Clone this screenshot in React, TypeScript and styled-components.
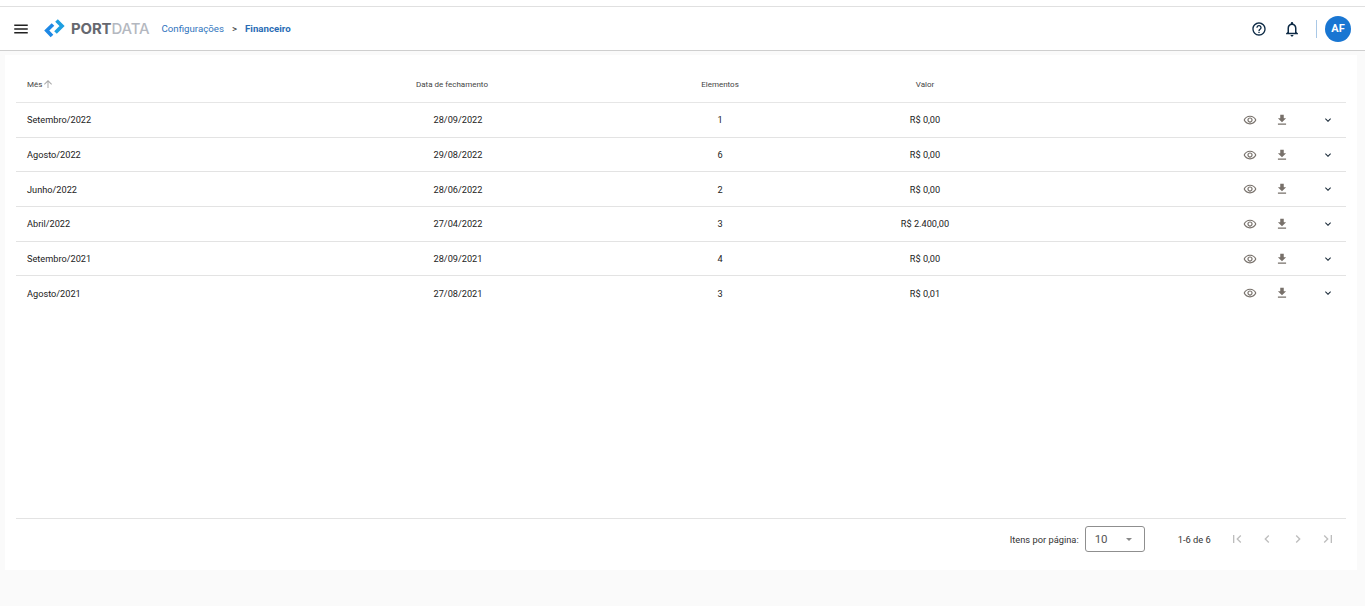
import React from 'react';
import styled, { createGlobalStyle } from 'styled-components';
import {
  MdArrowUpward,
  MdChevronLeft,
  MdChevronRight,
  MdExpandMore,
  MdFileDownload,
  MdFirstPage,
  MdHelpOutline,
  MdLastPage,
  MdMenu,
  MdNotificationsNone,
  MdOutlineRemoveRedEye,
} from 'react-icons/md';

const GlobalStyle = createGlobalStyle`
  html, body {
    margin: 0;
    height: 100%;
    background: #fafafa;
    font-family: Roboto, "Liberation Sans", sans-serif;
    color: #212121;
  }
`;

const Page = styled.div`
  width: 1365px;
  height: 606px;
  overflow: hidden;
  display: flex;
  flex-direction: column;
  background: #fafafa;
`;

const TopStrip = styled.div`
  height: 6px;
  background: #fff;
  border-bottom: 1px solid #e0e0e0;
`;

const Header = styled.header`
  height: 43px;
  flex: none;
  display: flex;
  align-items: center;
  background: #fff;
  border-bottom: 1px solid #cfcfcf;
  padding: 0 14px 0 12px;
`;

const MenuButton = styled.div`
  display: flex;
  width: 18px;
  margin-right: 14px;
  color: #212121;
`;

const Logo = styled.div`
  display: flex;
  align-items: center;
  gap: 6px;
  margin-right: 12px;
`;

const Wordmark = styled.div`
  font-family: Inter, Roboto, sans-serif;
  font-size: 14.9px;
  font-weight: 700;
  letter-spacing: -0.1px;
  color: #66686f;
  span {
    font-weight: 500;
    color: #b4b8c0;
  }
`;

const Crumbs = styled.nav`
  display: flex;
  align-items: center;
  font-size: 9.7px;
  color: #2f74bd;
`;

const Separator = styled.span`
  margin: 0 8px;
  color: #333;
`;

const CurrentCrumb = styled.span`
  font-weight: 700;
  color: #2a6db5;
`;

const HeaderRight = styled.div`
  margin-left: auto;
  display: flex;
  align-items: center;
`;

const HeaderIcon = styled.div<{ $gap: number }>`
  display: flex;
  color: #0d2a45;
  margin-right: ${(p) => p.$gap}px;
`;

const Divider = styled.div`
  width: 1px;
  height: 18px;
  background: #a9c8e6;
  margin-right: 8px;
`;

const Avatar = styled.div`
  width: 26px;
  height: 26px;
  border-radius: 50%;
  background: #1976d2;
  color: #fff;
  font-size: 11px;
  font-weight: 700;
  display: flex;
  align-items: center;
  justify-content: center;
`;

const Card = styled.main`
  margin: 4px 8px 0 5px;
  height: 515px;
  background: #fff;
  padding: 0 11px;
  display: flex;
  flex-direction: column;
`;

const Columns = styled.div`
  display: grid;
  grid-template-columns: 304px 264px 272px 138px 1fr;
  align-items: center;
`;

const HeadRow = styled(Columns)`
  height: 36px;
  padding-top: 11px;
  border-bottom: 1px solid #e6e6e6;
  font-size: 8px;
  color: #444;
`;

const Row = styled(Columns)<{ $last?: boolean }>`
  height: 33.7px;
  border-bottom: ${(p) => (p.$last ? 'none' : '1px solid #e3e3e3')};
  font-size: 9.2px;
  color: #222;
`;

const Cell = styled.div<{ $left?: boolean; $shift?: number }>`
  padding-left: ${(p) => (p.$left ? 11 : p.$shift ?? 0)}px;
  display: flex;
  align-items: center;
  justify-content: ${(p) => (p.$left ? 'flex-start' : 'center')};
`;

const SortIcon = styled.span`
  display: flex;
  color: #aaa;
`;

const Actions = styled.div`
  display: flex;
  align-items: center;
  justify-content: flex-end;
  padding-right: 12px;
  color: #77706a;
`;

const ActionIcon = styled.span<{ $gap?: number }>`
  display: flex;
  justify-content: center;
  margin-left: ${(p) => p.$gap ?? 0}px;
`;

const ChevronSlot = styled.span`
  display: flex;
  justify-content: center;
  margin-left: 33px;
  color: #1b2b3a;
`;

const Spacer = styled.div`
  flex: 1;
`;

const Footer = styled.footer`
  box-sizing: border-box;
  height: 52px;
  flex: none;
  border-top: 1px solid #e3e3e3;
  display: flex;
  align-items: center;
  justify-content: flex-end;
  font-size: 9.3px;
  color: #333;
  padding: 0 3px 11px 0;
`;

const SelectBox = styled.div`
  box-sizing: border-box;
  width: 60px;
  height: 26px;
  border: 1px solid #8f8f8f;
  border-radius: 3px;
  margin: 0 33px 0 6px;
  display: flex;
  align-items: center;
  justify-content: space-between;
  padding: 0 12px 0 9px;
  font-size: 11.5px;
  color: #555;
`;

const Caret = styled.span`
  width: 0;
  height: 0;
  border-left: 3.5px solid transparent;
  border-right: 3.5px solid transparent;
  border-top: 3.5px solid #888;
`;

const Pager = styled.div`
  display: flex;
  margin-left: 11px;
  color: #bdbdbd;
`;

const PagerButton = styled.span`
  display: flex;
  justify-content: center;
  width: 30.33px;
`;

const months = [
  { month: 'Setembro/2022', closed: '28/09/2022', count: 1, value: 'R$ 0,00' },
  { month: 'Agosto/2022', closed: '29/08/2022', count: 6, value: 'R$ 0,00' },
  { month: 'Junho/2022', closed: '28/06/2022', count: 2, value: 'R$ 0,00' },
  { month: 'Abril/2022', closed: '27/04/2022', count: 3, value: 'R$ 2.400,00' },
  { month: 'Setembro/2021', closed: '28/09/2021', count: 4, value: 'R$ 0,00' },
  { month: 'Agosto/2021', closed: '27/08/2021', count: 3, value: 'R$ 0,01' },
];

function LogoMark() {
  return (
    <svg width="21" height="19" viewBox="0 0 21 19" fill="none">
      <path d="M9 5.5 L2.8 11.5 L8 17" stroke="#1e88e5" strokeWidth="3.7" />
      <path d="M12.5 1.5 L18 7 L11.5 13.5" stroke="#1e9fe0" strokeWidth="3.7" />
    </svg>
  );
}

export default function App() {
  return (
    <>
      <GlobalStyle />
      <Page>
        <TopStrip />
        <Header>
          <MenuButton>
            <MdMenu size={18} />
          </MenuButton>
          <Logo>
            <LogoMark />
            <Wordmark>
              PORT<span>DATA</span>
            </Wordmark>
          </Logo>
          <Crumbs>
            Configurações
            <Separator>&gt;</Separator>
            <CurrentCrumb>Financeiro</CurrentCrumb>
          </Crumbs>
          <HeaderRight>
            <HeaderIcon $gap={16}>
              <MdHelpOutline size={16} />
            </HeaderIcon>
            <HeaderIcon $gap={15}>
              <MdNotificationsNone size={18} />
            </HeaderIcon>
            <Divider />
            <Avatar>AF</Avatar>
          </HeaderRight>
        </Header>
        <Card>
          <HeadRow>
            <Cell $left>
              Mês
              <SortIcon>
                <MdArrowUpward size={12} />
              </SortIcon>
            </Cell>
            <Cell>Data de fechamento</Cell>
            <Cell>Elementos</Cell>
            <Cell>Valor</Cell>
            <div />
          </HeadRow>
          {months.map((m, i) => (
            <Row key={m.month} $last={i === months.length - 1}>
              <Cell $left>{m.month}</Cell>
              <Cell $shift={12}>{m.closed}</Cell>
              <Cell>{m.count}</Cell>
              <Cell>{m.value}</Cell>
              <Actions>
                <ActionIcon>
                  <MdOutlineRemoveRedEye size={14} />
                </ActionIcon>
                <ActionIcon $gap={18}>
                  <MdFileDownload size={14} />
                </ActionIcon>
                <ChevronSlot>
                  <MdExpandMore size={12} />
                </ChevronSlot>
              </Actions>
            </Row>
          ))}
          <Spacer />
          <Footer>
            Itens por página:
            <SelectBox>
              10
              <Caret />
            </SelectBox>
            1-6 de 6
            <Pager>
              <PagerButton>
                <MdFirstPage size={16} />
              </PagerButton>
              <PagerButton>
                <MdChevronLeft size={16} />
              </PagerButton>
              <PagerButton>
                <MdChevronRight size={16} />
              </PagerButton>
              <PagerButton>
                <MdLastPage size={16} />
              </PagerButton>
            </Pager>
          </Footer>
        </Card>
      </Page>
    </>
  );
}
